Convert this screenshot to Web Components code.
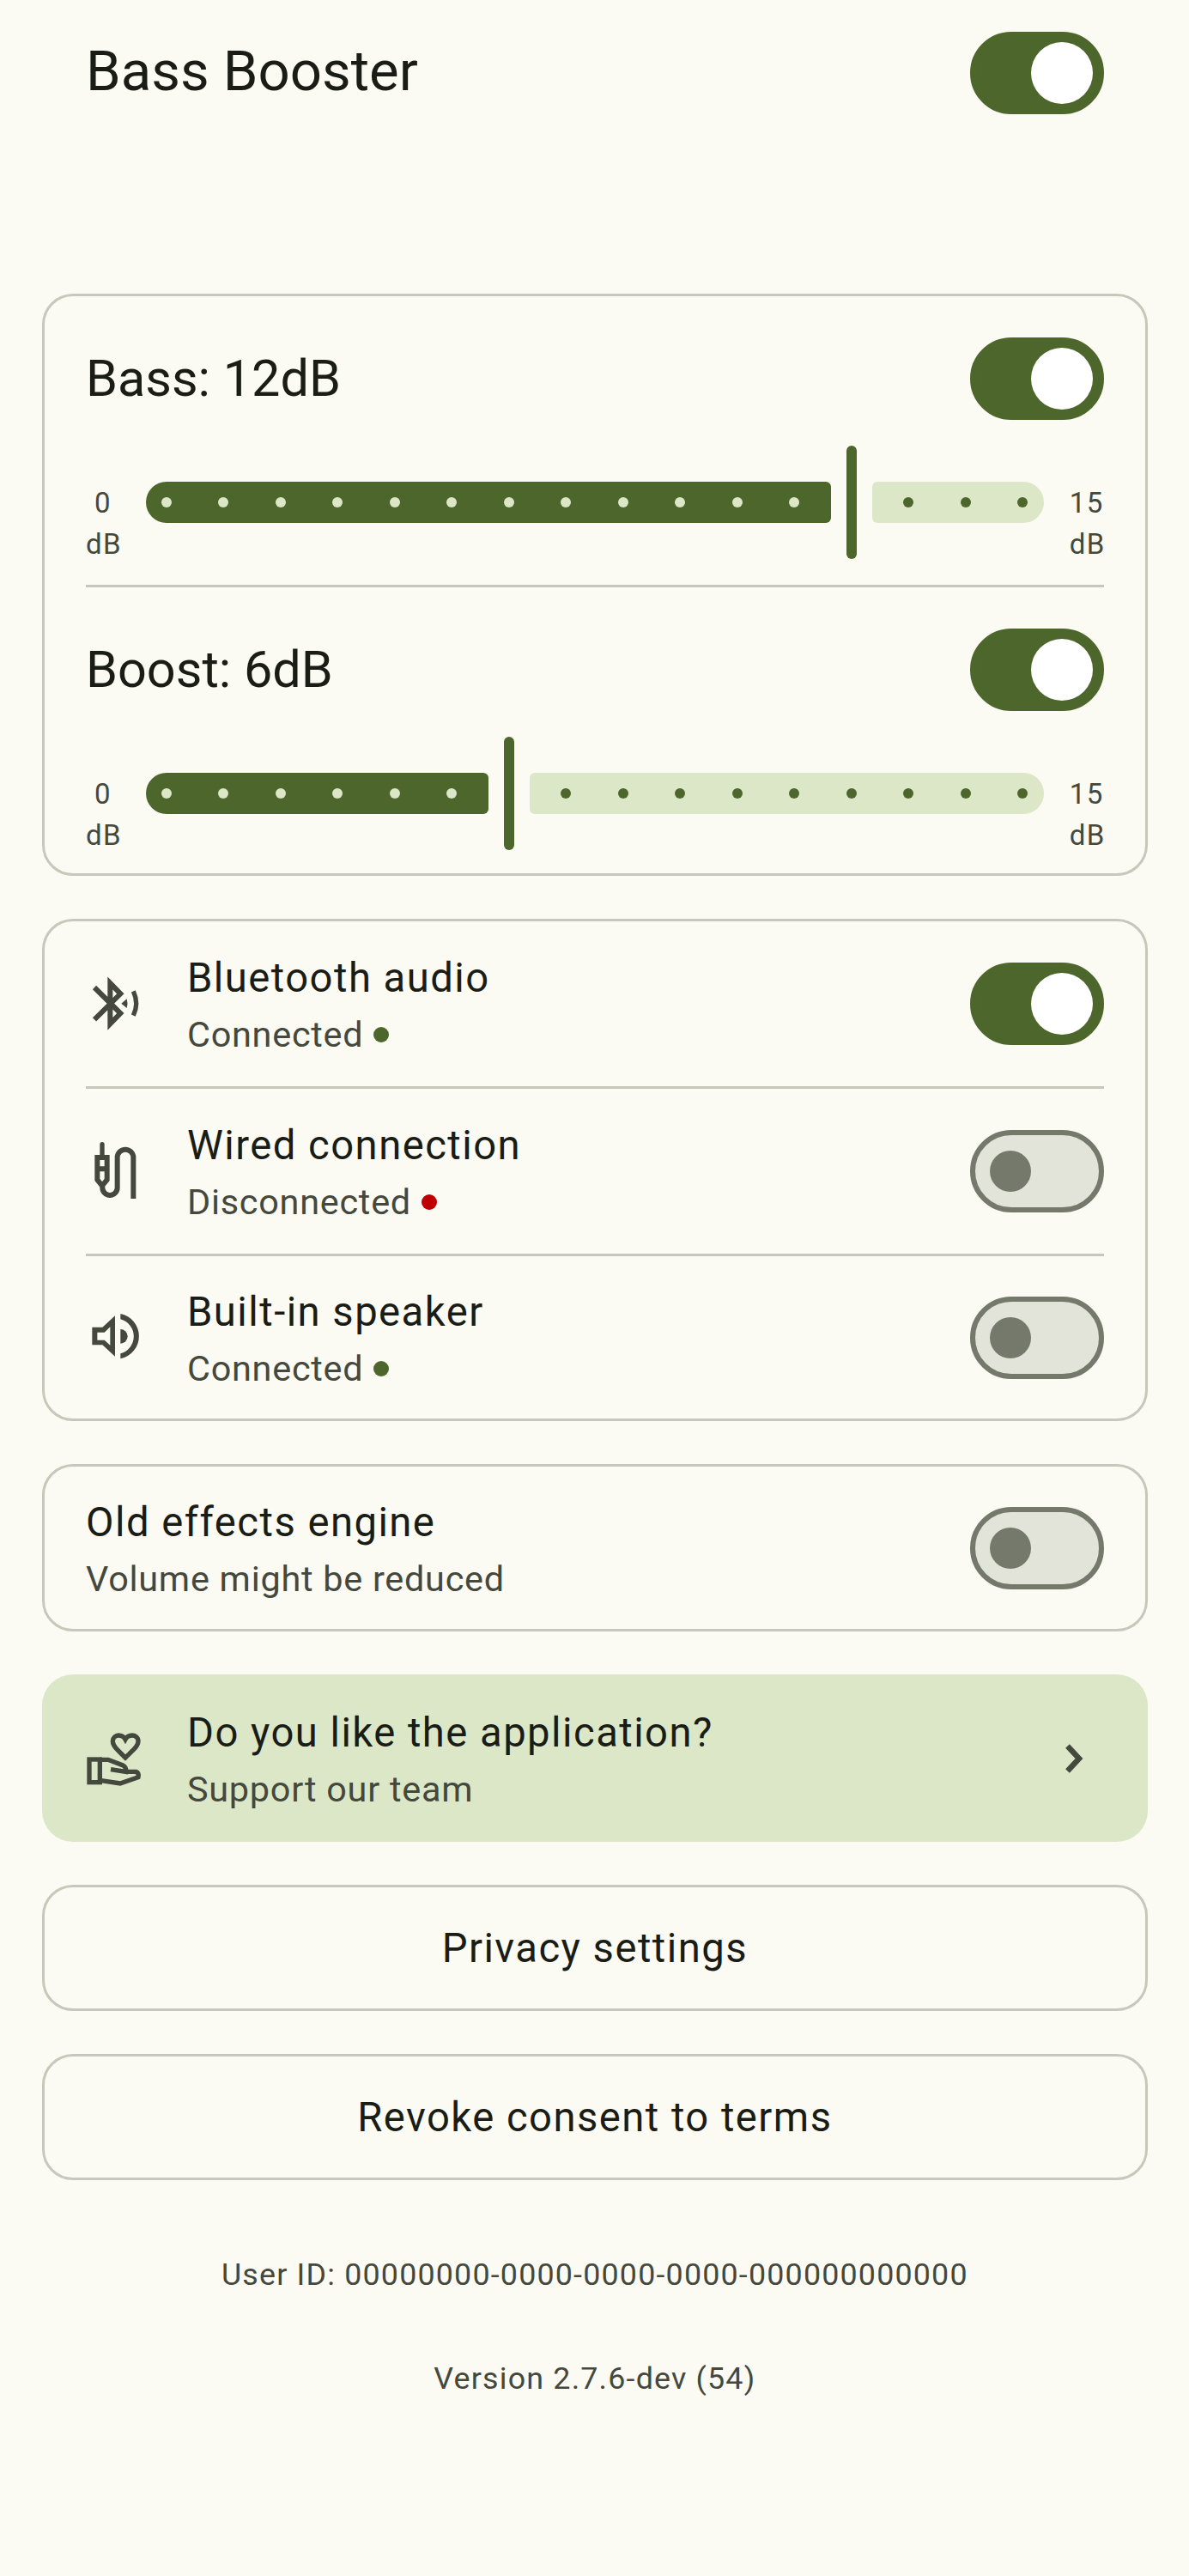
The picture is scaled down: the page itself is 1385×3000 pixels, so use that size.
<!DOCTYPE html>
<html>
<head>
<meta charset="utf-8">
<title>Bass Booster</title>
<style>
    html, body {
        margin: 0;
        background-color: #fbfbf3;
        color: #1a1c16;
        font-family: Roboto, "Liberation Sans", sans-serif;
    }
</style>
</head>
<body>
<bb-app>
    <bb-header slot="header" title="Bass Booster"></bb-header>

    <bb-card>
        <bb-gain title="Bass: 12dB" value="12"></bb-gain>
        <bb-divider></bb-divider>
        <bb-gain title="Boost: 6dB" value="6" last></bb-gain>
    </bb-card>

    <bb-card>
        <bb-row title="Bluetooth audio" sub="Connected" status="on" on>
            <bb-icon slot="icon" name="bluetooth"></bb-icon>
        </bb-row>
        <bb-divider></bb-divider>
        <bb-row title="Wired connection" sub="Disconnected" status="off">
            <bb-icon slot="icon" name="wired"></bb-icon>
        </bb-row>
        <bb-divider></bb-divider>
        <bb-row title="Built-in speaker" sub="Connected" status="on" last>
            <bb-icon slot="icon" name="speaker"></bb-icon>
        </bb-row>
    </bb-card>

    <bb-card>
        <bb-row title="Old effects engine" sub="Volume might be reduced" last></bb-row>
    </bb-card>

    <bb-banner title="Do you like the application?" sub="Support our team"></bb-banner>

    <bb-button>Privacy settings</bb-button>
    <bb-button>Revoke consent to terms</bb-button>

    <bb-footer>
        <span>User ID: 00000000-0000-0000-0000-000000000000</span>
        <span>Version 2.7.6-dev (54)</span>
    </bb-footer>
</bb-app>

<script>
const icons = {
    bluetooth: `<svg viewBox="60 99 216 216" width="72" height="72" fill="none" stroke="#44483d" stroke-width="18">
        <path d="M90 150L181 240L145 277V135L181 172L90 262"/>
        <path d="M184 206L203 190Q208 206 203 222Z" fill="#44483d" stroke="none"/>
        <path d="M226 163Q246 206 226 248" stroke-width="16"/>
    </svg>`,
    wired: `<svg viewBox="60 84 216 216" width="72" height="72" fill="none" stroke="#44483d" stroke-width="18">
        <path d="M117 98V135" stroke-linecap="round" stroke-width="16"/>
        <path d="M100 144H134V222L117 243L100 222Z M100 184H134"/>
        <path d="M118 246V250A26 26 0 0 0 170 250V144A28 28 0 0 1 226 144V288"/>
    </svg>`,
    speaker: `<svg viewBox="60 69 216 216" width="72" height="72" fill="#44483d">
        <path fill-rule="evenodd" d="M82 140H118L162 100V242L118 202H82Z M100 158V185H125L145 203V139L125 158Z"/>
        <path d="M181 93A80 80 0 0 1 181 250V232A62 62 0 0 0 181 112Z"/>
        <path d="M181 147A25 25 0 0 1 181 197Z"/>
    </svg>`,
    hand: `<svg viewBox="60 63 216 216" width="72" height="72" fill="none" stroke="#44483d" stroke-width="16">
        <path d="M198 168C170 140 154 128 154 110C154 98 164 90 174 90C184 90 193 95 198 104C203 95 212 90 222 90C232 90 243 98 243 110C243 128 226 140 198 168Z"/>
        <rect x="72" y="174" width="37" height="80"/>
        <path d="M108 175H138L190 195Q202 202 200 217L147 209"/>
        <path d="M200 217H235Q247 222 243 236L180 258L108 247"/>
    </svg>`,
    chevron: `<svg viewBox="0 0 72 72" width="72" height="72" fill="none" stroke="#44483d" stroke-width="6.5">
        <path d="M29.5 21.5L43 36L29.5 50.5"/>
    </svg>`
};

const esc = (s) => (s || "").replace(/&/g, "&amp;").replace(/</g, "&lt;");

class BbApp extends HTMLElement {
    constructor() {
        super();
        this.attachShadow({ mode: "open" });
        this.shadowRoot.innerHTML = `
        <style>
            :host { display: block; width: 1385px; height: 3000px; box-sizing: border-box; padding: 37px 48.3px 0 49px; }
            .stack { display: flex; flex-direction: column; gap: 50px; }
        </style>
        <slot name="header"></slot>
        <div class="stack"><slot></slot></div>`;
    }
}

class BbHeader extends HTMLElement {
    constructor() {
        super();
        this.attachShadow({ mode: "open" });
        this.shadowRoot.innerHTML = `
        <style>
            :host { display: flex; align-items: center; justify-content: space-between; height: 96px; padding: 0 51px; margin-bottom: 209px; }
            .title { font-size: 65.3px; line-height: 92px; margin-bottom: 4px; }
        </style>
        <div class="title">${esc(this.getAttribute("title"))}</div>
        <bb-switch on></bb-switch>`;
    }
}

class BbCard extends HTMLElement {
    constructor() {
        super();
        this.attachShadow({ mode: "open" });
        this.shadowRoot.innerHTML = `
        <style>
            :host { display: block; border: 3px solid #c5c8ba; border-radius: 36px; padding: 0 48px; }
        </style>
        <slot></slot>`;
    }
}

class BbDivider extends HTMLElement {
    constructor() {
        super();
        this.attachShadow({ mode: "open" });
        this.shadowRoot.innerHTML = `<style>:host { display: block; height: 3px; background-color: #c5c8ba; }</style>`;
    }
}

class BbSwitch extends HTMLElement {
    constructor() {
        super();
        this.attachShadow({ mode: "open" });
        this.shadowRoot.innerHTML = `
        <style>
            :host { display: flex; align-items: center; flex: none; box-sizing: border-box; width: 155.5px; height: 96px; border-radius: 48px; border: 6px solid #75796c; background-color: #e2e3d9; padding-left: 17px; }
            :host([on]) { background-color: #4c662b; border-color: #4c662b; padding-left: 64.5px; }
            .thumb { flex: none; width: 48px; height: 48px; border-radius: 50%; background-color: #75796c; }
            :host([on]) .thumb { width: 72px; height: 72px; background-color: #fff; }
        </style>
        <div class="thumb"></div>`;
    }
}

class BbIcon extends HTMLElement {
    constructor() {
        super();
        this.attachShadow({ mode: "open" });
        this.shadowRoot.innerHTML = `
        <style>:host { display: block; width: 72px; height: 72px; flex: none; } svg { display: block; }</style>
        ${icons[this.getAttribute("name")]}`;
    }
}

class BbGain extends HTMLElement {
    constructor() {
        super();
        this.attachShadow({ mode: "open" });
        this.shadowRoot.innerHTML = `
        <style>
            :host { display: block; padding: 48px 0 30px; }
            :host([last]) { padding-bottom: 27px; }
            .head { display: flex; align-items: center; justify-content: space-between; height: 96px; margin-bottom: 30px; }
            .title { font-size: 59.4px; }
        </style>
        <div class="head">
            <div class="title">${esc(this.getAttribute("title"))}</div>
            <bb-switch on></bb-switch>
        </div>
        <bb-slider value="${this.getAttribute("value")}"></bb-slider>`;
    }
}

class BbSlider extends HTMLElement {
    constructor() {
        super();
        this.attachShadow({ mode: "open" });
        const value = Number(this.getAttribute("value"));
        const step = 997 / 15;
        const center = 24 + value * step;
        const activeWidth = center - 24;
        const inactiveStart = center + 24;
        let active = "";
        let inactive = "";
        for (let i = 0; i <= 15; i++) {
            const x = 24 + i * step;
            if (i < value) active += `<i style="left:${x - 6}px"></i>`;
            if (i > value) inactive += `<i style="left:${x - inactiveStart - 6}px"></i>`;
        }
        this.shadowRoot.innerHTML = `
        <style>
            :host { display: flex; align-items: flex-start; height: 132px; }
            .label { width: 40px; flex: none; margin-top: 43px; text-align: center; font-size: 33px; line-height: 48px; letter-spacing: 1.5px; color: #44483d; }
            .track { flex: 1; display: flex; align-items: center; height: 132px; margin: 0 30px; }
            .seg { position: relative; height: 48px; }
            .active { width: ${activeWidth}px; background-color: #4c662b; border-radius: 24px 6px 6px 24px; }
            .inactive { flex: 1; background-color: #dce7c8; border-radius: 6px 24px 24px 6px; }
            .handle { flex: none; width: 12px; height: 132px; margin: 0 18px; border-radius: 6px; background-color: #4c662b; }
            i { position: absolute; top: 18px; width: 12px; height: 12px; border-radius: 50%; }
            .active i { background-color: #dce7c8; }
            .inactive i { background-color: #4c662b; }
        </style>
        <div class="label">0<br>dB</div>
        <div class="track">
            <div class="seg active">${active}</div>
            <div class="handle"></div>
            <div class="seg inactive">${inactive}</div>
        </div>
        <div class="label">15<br>dB</div>`;
    }
}

const textStyles = `
    .text { flex: 1; min-width: 0; }
    .title { font-size: 47.2px; line-height: 72px; letter-spacing: 1.47px; color: #1a1c16; }
    .sub { display: flex; align-items: center; gap: 12px; font-size: 41.4px; line-height: 60px; letter-spacing: 0.74px; color: #44483d; }
    .dot { width: 18px; height: 18px; border-radius: 50%; }
    .dot.on { background-color: #4c662b; }
    .dot.off { background-color: #c00000; }
`;

class BbRow extends HTMLElement {
    constructor() {
        super();
        this.attachShadow({ mode: "open" });
        const status = this.getAttribute("status");
        this.shadowRoot.innerHTML = `
        <style>
            :host { display: flex; align-items: center; height: 192px; }
            :host([last]) { height: 189px; }
            ::slotted([slot="icon"]) { margin-right: 46px; }
            ${textStyles}
        </style>
        <slot name="icon"></slot>
        <div class="text">
            <div class="title">${esc(this.getAttribute("title"))}</div>
            <div class="sub">${esc(this.getAttribute("sub"))}${status ? `<span class="dot ${status}"></span>` : ""}</div>
        </div>
        <bb-switch ${this.hasAttribute("on") ? "on" : ""}></bb-switch>`;
    }
}

class BbBanner extends HTMLElement {
    constructor() {
        super();
        this.attachShadow({ mode: "open" });
        this.shadowRoot.innerHTML = `
        <style>
            :host { display: flex; align-items: center; height: 195px; padding: 0 51px; border-radius: 36px; background-color: #dce7c8; }
            .lead { margin-right: 46px; }
            ${textStyles}
        </style>
        <bb-icon class="lead" name="hand"></bb-icon>
        <div class="text">
            <div class="title">${esc(this.getAttribute("title"))}</div>
            <div class="sub">${esc(this.getAttribute("sub"))}</div>
        </div>
        <bb-icon name="chevron"></bb-icon>`;
    }
}

class BbButton extends HTMLElement {
    constructor() {
        super();
        this.attachShadow({ mode: "open" });
        this.shadowRoot.innerHTML = `
        <style>
            :host { display: flex; align-items: center; justify-content: center; box-sizing: border-box; height: 147px; border: 3px solid #c5c8ba; border-radius: 36px; font-size: 47.2px; letter-spacing: 1.47px; color: #1a1c16; }
        </style>
        <slot></slot>`;
    }
}

class BbFooter extends HTMLElement {
    constructor() {
        super();
        this.attachShadow({ mode: "open" });
        this.shadowRoot.innerHTML = `
        <style>
            :host { display: flex; flex-direction: column; align-items: center; gap: 73px; margin-top: 36px; font-size: 35.8px; line-height: 48px; letter-spacing: 1.2px; color: #44483d; }
        </style>
        <slot></slot>`;
    }
}

customElements.define("bb-switch", BbSwitch);
customElements.define("bb-icon", BbIcon);
customElements.define("bb-divider", BbDivider);
customElements.define("bb-slider", BbSlider);
customElements.define("bb-gain", BbGain);
customElements.define("bb-row", BbRow);
customElements.define("bb-banner", BbBanner);
customElements.define("bb-button", BbButton);
customElements.define("bb-card", BbCard);
customElements.define("bb-footer", BbFooter);
customElements.define("bb-header", BbHeader);
customElements.define("bb-app", BbApp);
</script>
</body>
</html>
